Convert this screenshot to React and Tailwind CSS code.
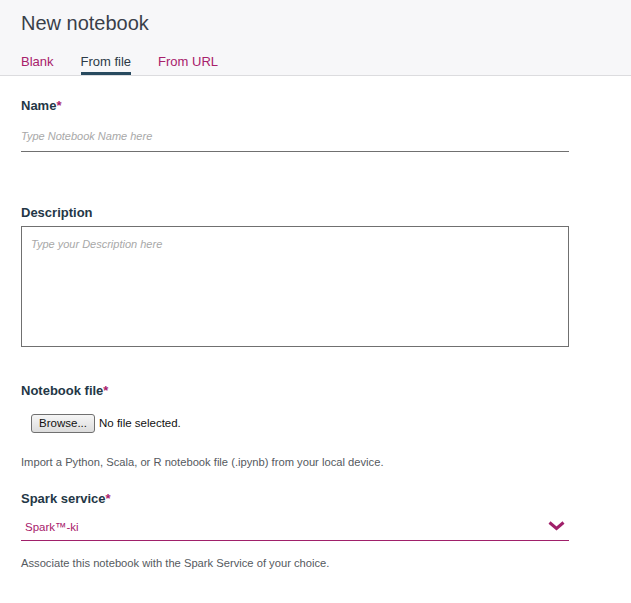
export default function App() {
  return (
    <div className="w-[631px] h-[603px] bg-white font-['Liberation_Sans',Arial,sans-serif]">
      <div className="bg-[#f7f7f9] border-b border-[#dcdcdf] pl-[21px]">
        <div className="pt-[11px] h-[50px] text-[20px] leading-[24px] text-[#3a3f4a]">New notebook</div>
        <div className="flex gap-[27px] text-[13px] leading-[16px] h-[25px]">
          <div className="text-[#a8206b] pt-[4px]">Blank</div>
          <div className="text-[#2c3a47] pt-[4px] border-b-[3px] border-[#284a5f]">From file</div>
          <div className="text-[#a8206b] pt-[4px]">From URL</div>
        </div>
      </div>

      <div className="pl-[21px] w-[569px]">
        <div className="pt-[22px] text-[13px] leading-[16px] font-bold text-[#243746]">
          Name<span className="text-[#a8206b]">*</span>
        </div>
        <div className="h-[38px] border-b border-[#707070] pt-[15px] text-[11px] leading-[14px] italic text-[#a8a8a8]">
          Type Notebook Name here
        </div>

        <div className="mt-[53px] text-[13px] leading-[16px] font-bold text-[#243746]">Description</div>
        <div className="mt-[5px] h-[121px] border border-[#707070] pl-[9px] pt-[10px] text-[11px] leading-[14px] italic text-[#a8a8a8]">
          Type your Description here
        </div>

        <div className="mt-[36px] text-[13px] leading-[16px] font-bold text-[#243746]">
          Notebook file<span className="text-[#a8206b]">*</span>
        </div>
        <div className="mt-[15px] ml-[10px] flex items-center gap-[4px] text-[11.5px] text-[#111]">
          <div className="w-[64px] h-[19px] border border-[#707070] rounded-[3px] bg-gradient-to-b from-[#f6f6f6] to-[#dcdcdc] flex items-center justify-center">
            Browse...
          </div>
          <span>No file selected.</span>
        </div>
        <div className="mt-[22px] text-[11.2px] leading-[14px] text-[#555a60]">
          Import a Python, Scala, or R notebook file (.ipynb) from your local device.
        </div>

        <div className="mt-[22px] text-[13px] leading-[16px] font-bold text-[#243746]">
          Spark service<span className="text-[#a8206b]">*</span>
        </div>
        <div className="mt-[7px] h-[27px] border-b border-[#a0206a] flex items-start justify-between pl-[4px] pr-[4px] pt-[6px]">
          <span className="text-[11.5px] leading-[14px] text-[#a8206b]">Spark™-ki</span>
          <svg width="17" height="10" viewBox="0 0 17 10" className="mt-[1px]">
            <path d="M1.5 1.5 L8.5 7.5 L15.5 1.5" fill="none" stroke="#a0206a" strokeWidth="3" />
          </svg>
        </div>
        <div className="mt-[15px] text-[11.2px] leading-[14px] text-[#555a60]">
          Associate this notebook with the Spark Service of your choice.
        </div>
      </div>
    </div>
  );
}
